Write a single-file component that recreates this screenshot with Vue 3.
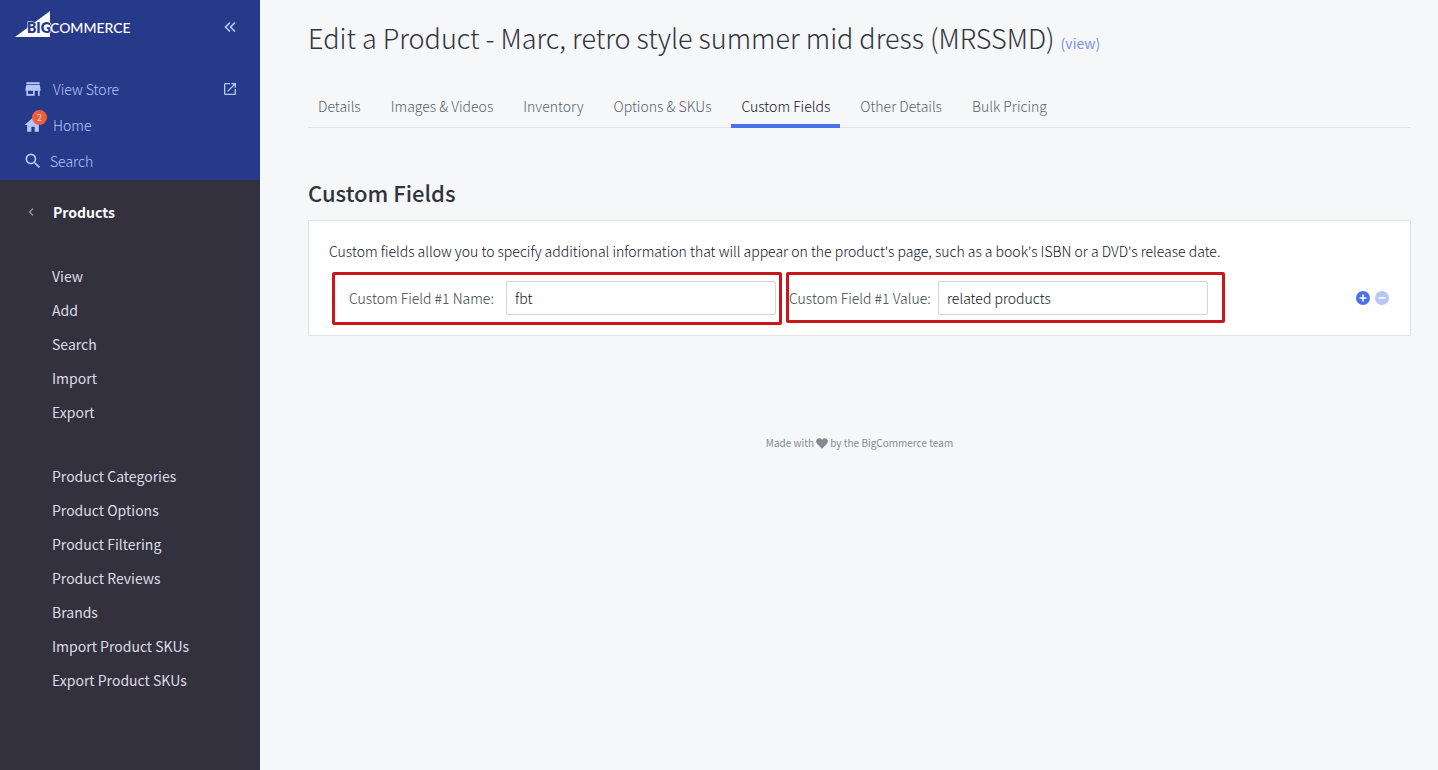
<script setup>
import { ref } from 'vue'

const tabs = ['Details', 'Images & Videos', 'Inventory', 'Options & SKUs', 'Custom Fields', 'Other Details', 'Bulk Pricing']
const activeTab = ref('Custom Fields')
const productLinks = ['View', 'Add', 'Search', 'Import', 'Export']
const catalogLinks = ['Product Categories', 'Product Options', 'Product Filtering', 'Product Reviews', 'Brands', 'Import Product SKUs', 'Export Product SKUs']
const fieldName = ref('fbt')
const fieldValue = ref('related products')
</script>

<template>
  <div class="page">
    <aside class="sidebar">
      <div class="top">
        <div class="brand-row">
          <a class="brand" href="#" aria-label="BigCommerce">
            <svg width="120" height="28" viewBox="0 0 120 28" aria-hidden="true">
              <path d="M0 27 L35 1 V27 Z" fill="#fff" />
              <text class="logo-text big" x="12" y="23">BIG</text>
              <text class="logo-text" x="35" y="23">COMMERCE</text>
            </svg>
          </a>
          <button class="icon-btn" type="button" aria-label="Collapse menu">
            <svg width="12" height="12" viewBox="0 0 12 12"><path d="M6 1.500 L1.500 6 L6 10.500 M11 1.500 L6.500 6 L11 10.500" fill="none" stroke="currentColor" stroke-width="1.700" /></svg>
          </button>
        </div>
        <nav class="primary">
          <a href="#" class="primary-link">
            <svg class="nav-icon" width="20" height="20" viewBox="0 0 24 24"><path fill="currentColor" d="M20 4H4v2h16V4zm1 10v-2l-1-5H4l-1 5v2h1v6h10v-6h4v6h2v-6h1zm-9 4H6v-4h6v4z" /></svg>
            <span class="label">View Store</span>
            <svg class="external" width="16" height="16" viewBox="0 0 24 24"><path fill="currentColor" d="M19 19H5V5h7V3H5a2 2 0 0 0-2 2v14a2 2 0 0 0 2 2h14c1.100 0 2-.9 2-2v-7h-2v7zM14 3v2h3.590l-9.830 9.830 1.410 1.410L19 6.410V10h2V3h-7z" /></svg>
          </a>
          <a href="#" class="primary-link">
            <span class="home-icon">
              <svg class="nav-icon" width="20" height="20" viewBox="0 0 24 24"><path fill="currentColor" d="M10 20v-6h4v6h5v-8h3L12 3 2 12h3v8z" /></svg>
              <span class="badge">2</span>
            </span>
            <span class="label">Home</span>
          </a>
          <a href="#" class="primary-link search">
            <svg class="nav-icon" width="20" height="20" viewBox="0 0 24 24"><path fill="currentColor" d="M15.500 14h-.79l-.28-.27A6.470 6.470 0 0 0 16 9.500 6.500 6.500 0 1 0 9.500 16c1.610 0 3.090-.59 4.230-1.570l.27.28v.79l5 4.990L20.490 19l-4.990-5zm-6 0C7.010 14 5 11.990 5 9.500S7.010 5 9.500 5 14 7.010 14 9.500 11.990 14 9.500 14z" /></svg>
            <span class="label">Search</span>
          </a>
        </nav>
      </div>
      <button class="section" type="button">
        <svg width="6" height="8" viewBox="0 0 6 8"><path d="M5 0.500 L1.500 4 L5 7.500" fill="none" stroke="#9a99a8" stroke-width="1.200" /></svg>
        <span>Products</span>
      </button>
      <nav class="links">
        <a v-for="item in productLinks" :key="item" href="#">{{ item }}</a>
      </nav>
      <nav class="links">
        <a v-for="item in catalogLinks" :key="item" href="#">{{ item }}</a>
      </nav>
    </aside>

    <main class="content">
      <h1>Edit a Product - Marc, retro style summer mid dress (MRSSMD) <a href="#">(view)</a></h1>
      <div class="tabs" role="tablist">
        <button
          v-for="tab in tabs"
          :key="tab"
          type="button"
          role="tab"
          :aria-selected="tab === activeTab"
          :class="{ active: tab === activeTab }"
          @click="activeTab = tab"
        >{{ tab }}</button>
      </div>

      <h2>Custom Fields</h2>
      <section class="card">
        <p>Custom fields allow you to specify additional information that will appear on the product's page, such as a book's ISBN or a DVD's release date.</p>
        <div class="row">
          <div class="field name">
            <label for="field-name">Custom Field #1 Name:</label>
            <input id="field-name" v-model="fieldName" type="text" />
          </div>
          <div class="field value">
            <label for="field-value">Custom Field #1 Value:</label>
            <input id="field-value" v-model="fieldValue" type="text" />
          </div>
          <div class="actions">
            <button class="round" type="button" aria-label="Add custom field">
              <svg width="14" height="14" viewBox="0 0 14 14"><circle cx="7" cy="7" r="7" fill="#4b71e8" /><path d="M7 3.500v7M3.500 7h7" stroke="#fff" stroke-width="1.600" /></svg>
            </button>
            <button class="round" type="button" aria-label="Remove custom field">
              <svg width="14" height="14" viewBox="0 0 14 14"><circle cx="7" cy="7" r="7" fill="#b9c6f6" /><path d="M3.500 7h7" stroke="#fff" stroke-width="1.600" /></svg>
            </button>
          </div>
        </div>
      </section>

      <footer>
        Made with
        <svg width="12" height="11" viewBox="0 0 12 11" aria-label="love"><path fill="currentColor" d="M6 10.800 L1.200 6 C-0.400 4.300 -0.200 2 1.200 0.900 C2.700 -0.300 5 0 6 2 C7 0 9.300 -0.300 10.800 0.900 C12.200 2 12.400 4.300 10.800 6 Z" /></svg>
        by the BigCommerce team
      </footer>
    </main>
  </div>
</template>

<style>
body {
  background: #f6f7f9;
}
</style>

<style scoped>
.page {
  display: flex;
  min-height: 100vh;
  font-family: "Noto Sans CJK SC", "Noto Sans", sans-serif;
  font-size: 14px;
  line-height: 20px;
  color: #313440;
}
a {
  text-decoration: none;
}
button {
  font: inherit;
  color: inherit;
  background: none;
  border: 0;
  padding: 0;
  cursor: pointer;
}
svg {
  display: block;
}
.sidebar {
  flex: 0 0 260px;
  background: #34313f;
}
.top {
  box-sizing: border-box;
  padding: 10px 0 1px;
  background: #273a8a;
  color: #b7c6ff;
}
.brand-row {
  display: flex;
  justify-content: space-between;
  align-items: center;
  height: 34px;
  padding: 0 24px 0 15px;
}
.brand {
  align-self: flex-start;
}
.logo-text {
  font-family: Lato, sans-serif;
  font-size: 14px;
  font-weight: 500;
  fill: #fff;
}
.logo-text.big {
  fill: #273a8a;
  stroke: #fff;
  stroke-width: 1px;
  paint-order: stroke;
  font-weight: 800;
}
.primary {
  padding-top: 27px;
}
.primary-link {
  display: flex;
  align-items: center;
  height: 36px;
  padding: 0 22px 0 23px;
  color: inherit;
  font-weight: 300;
}
.primary-link .label {
  margin-left: 10px;
}
.primary-link.search .label {
  margin-left: 7px;
}
.external {
  margin-left: auto;
}
.home-icon {
  position: relative;
}
.badge {
  position: absolute;
  top: -5px;
  right: -4px;
  width: 15px;
  height: 15px;
  border-radius: 50%;
  background: #ec5f3c;
  color: #fff;
  font-size: 9px;
  line-height: 15px;
  text-align: center;
}
.section {
  display: flex;
  align-items: center;
  gap: 19px;
  width: 100%;
  padding: 22px 28px;
  color: #fff;
  font-weight: 700;
}
.links {
  display: flex;
  flex-direction: column;
  padding: 15px 0;
}
.links a {
  padding: 7px 52px;
  color: #dcdbe4;
  font-weight: 400;
}
.content {
  flex: 1;
  min-width: 0;
  padding: 20px 27px 40px 48px;
  font-weight: 300;
}
h1 {
  margin: 0;
  font-size: 27px;
  line-height: 36px;
  font-weight: 200;
}
h1 a {
  font-size: 14px;
  font-weight: 400;
  color: #7a90ea;
}
.tabs {
  display: flex;
  gap: 10px;
  margin-top: 25px;
  border-bottom: 1px solid #e0e3e9;
}
.tabs button {
  padding: 10px 10px 8px;
  margin-bottom: -1px;
  border-bottom: 4px solid transparent;
  color: #5c5f6a;
}
.tabs button.active {
  border-bottom-color: #4b71e8;
  color: #12141f;
}
h2 {
  margin: 48px 0 12px;
  font-size: 22px;
  line-height: 32px;
  font-weight: 500;
}
.card {
  padding: 20px;
  padding-bottom: 10px;
  background: #fff;
  border: 1px solid #e0e3e9;
}
.card p {
  margin: 0 0 11px;
  color: #12141f;
}
.row {
  display: flex;
  align-items: flex-start;
}
.field {
  display: flex;
  align-items: center;
  border: 3px solid #c8171c;
  border-radius: 2px;
  color: #3a3d46;
}
.field.name {
  margin: 0 4px 0 3px;
  padding: 6px 3px 7px 14px;
}
.field.value {
  padding: 6px 14px 5px 0;
}
.field.name label {
  width: 157px;
}
.field.value label {
  width: 149px;
}
.field input {
  box-sizing: border-box;
  width: 270px;
  height: 34px;
  padding: 0 8px;
  border: 1px solid #d0d3da;
  border-radius: 2px;
  background: #fff;
  font: inherit;
  color: #12141f;
}
.actions {
  display: flex;
  gap: 5px;
  margin: 19px 1px 0 auto;
}
footer {
  display: flex;
  justify-content: center;
  align-items: center;
  gap: 2px;
  margin-top: 97px;
  font-size: 10px;
  font-weight: 400;
  color: #868993;
}
</style>
